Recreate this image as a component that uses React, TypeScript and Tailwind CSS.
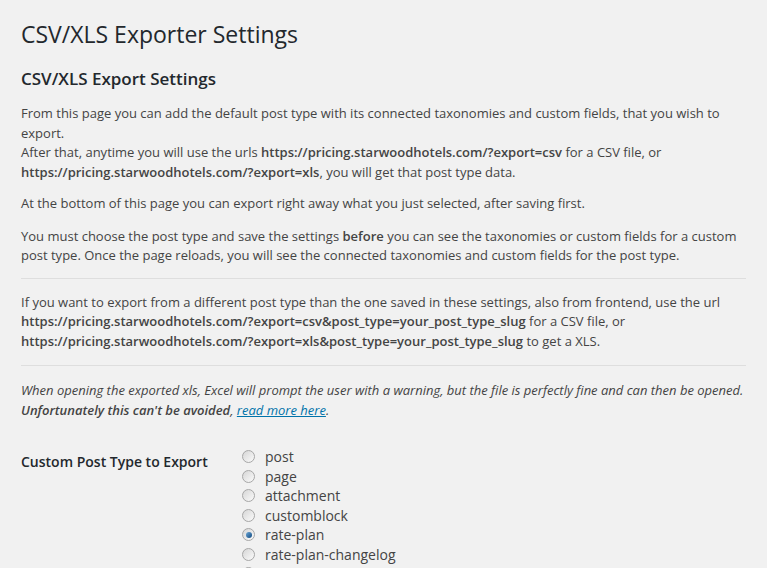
import React from "react";

const options = [
  { label: "post", checked: false },
  { label: "page", checked: false },
  { label: "attachment", checked: false },
  { label: "customblock", checked: false },
  { label: "rate-plan", checked: true },
  { label: "rate-plan-changelog", checked: false },
  { label: "rate-plan-other", checked: false },
];

function Radio({ checked }: { checked: boolean }) {
  return (
    <span className="ml-[1px] inline-flex h-[13px] w-[13px] shrink-0 items-center justify-center rounded-full border border-[#a7a7a7] bg-gradient-to-br from-[#d6d6d6] to-[#fbfbfb]">
      {checked && (
        <span className="h-[6px] w-[6px] rounded-full bg-gradient-to-br from-[#6aa6d6] to-[#0e4a80]" />
      )}
    </span>
  );
}

export default function App() {
  return (
    <div
      className="min-h-[568px] bg-[#f1f1f1] px-[21px] text-[#444]"
      style={{ fontFamily: '"Open Sans", sans-serif' }}
    >
      <h1 className="pt-[19px] text-[23px] font-normal leading-[30px] text-[#23282d]">
        CSV/XLS Exporter Settings
      </h1>
      <h2 className="mt-[19px] text-[17px] font-semibold leading-[22px] text-[#23282d]">
        CSV/XLS Export Settings
      </h2>
      <div className="text-[13px] leading-[19.5px]">
        <p className="mt-[14px]">
          From this page you can add the default post type with its connected taxonomies and custom fields, that you wish to export.
          <br />
          After that, anytime you will use the urls <b className="font-semibold">https://pricing.starwoodhotels.com/?export=csv</b> for a CSV file, or{" "}
          <b className="font-semibold">https://pricing.starwoodhotels.com/?export=xls</b>, you will get that post type data.
        </p>
        <p className="mt-[12px]">
          At the bottom of this page you can export right away what you just selected, after saving first.
        </p>
        <p className="mt-[13px]">
          You must choose the post type and save the settings <b className="font-semibold">before</b> you can see the taxonomies or custom fields for a custom post type. Once the page reloads, you will see the connected taxonomies and custom fields for the post type.
        </p>
        <hr className="mt-[12px] border-0 border-t border-[#dedede]" />
        <p className="mt-[14px]">
          If you want to export from a different post type than the one saved in these settings, also from frontend, use the url{" "}
          <b className="font-semibold">https://pricing.starwoodhotels.com/?export=csv&amp;post_type=your_post_type_slug</b> for a CSV file, or{" "}
          <b className="font-semibold">https://pricing.starwoodhotels.com/?export=xls&amp;post_type=your_post_type_slug</b> to get a XLS.
        </p>
        <hr className="mt-[14px] border-0 border-t border-[#dedede]" />
        <p className="mt-[15px] italic">
          When opening the exported xls, Excel will prompt the user with a warning, but the file is perfectly fine and can then be opened.{" "}
          <b className="font-semibold">Unfortunately this can't be avoided</b>,{" "}
          <a className="text-[#0073aa] underline" href="#">read more here</a>.
        </p>
      </div>
      <div className="mt-[27px] flex text-[14px]">
        <div className="w-[210px] shrink-0 pt-[4px] font-semibold leading-[21px] text-[#23282d]">
          Custom Post Type to Export
        </div>
        <div className="flex flex-col pl-[10px]">
          {options.map((o) => (
            <label key={o.label} className="flex h-[19.5px] items-center gap-[10px] leading-[19.5px]">
              <Radio checked={o.checked} />
              <span>{o.label}</span>
            </label>
          ))}
        </div>
      </div>
    </div>
  );
}
